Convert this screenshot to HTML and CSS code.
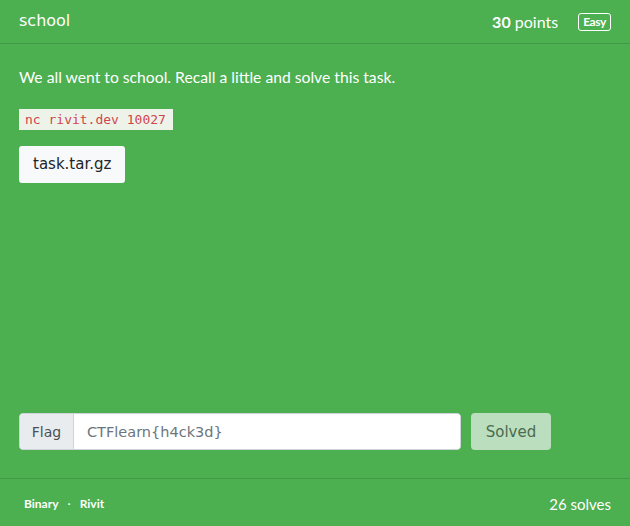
FILE: index.html
```html
<!DOCTYPE html>
<html>
<head>
<meta charset="utf-8">
<link rel="stylesheet" href="styles.css">
</head>
<body>
<div class="card">
  <div class="card-header">
    <div class="title">school</div>
    <div class="meta">
      <span class="points"><b>30</b> points</span>
      <span class="badge">Easy</span>
    </div>
  </div>
  <div class="card-body">
    <p class="desc">We all went to school. Recall a little and solve this task.</p>
    <div class="code-row"><code class="code">nc rivit.dev 10027</code></div>
    <div class="files"><a class="file-btn">task.tar.gz</a></div>
    <div class="spacer"></div>
    <div class="flag-row">
      <div class="input-group">
        <span class="prepend">Flag</span>
        <input class="flag-input" type="text" value="CTFlearn{h4ck3d}">
      </div>
      <button class="solved-btn">Solved</button>
    </div>
  </div>
  <div class="card-footer">
    <div class="tags"><b>Binary</b><span class="dot">·</span><b>Rivit</b></div>
    <div class="solves">26 solves</div>
  </div>
</div>
</body>
</html>
```
FILE: styles.css
```css
html, body {
  margin: 0;
  padding: 0;
  background: #4caf50;
}
body {
  font-family: Lato, "Open Sans", sans-serif;
  color: #fff;
}
.card {
  width: 630px;
  height: 526px;
  display: flex;
  flex-direction: column;
  background: #4caf50;
}
.card-header {
  height: 44px;
  box-sizing: border-box;
  border-bottom: 1px solid rgba(0,0,0,0.13);
  display: flex;
  align-items: center;
  justify-content: space-between;
  padding: 0 19px 0 19px;
}
.title {
  font-family: "DejaVu Sans", sans-serif;
  font-size: 16px;
  font-weight: 400;
  margin-top: -3px;
}
.meta {
  display: flex;
  align-items: center;
  gap: 20px;
}
.points {
  font-size: 16px;
}
.points b {
  font-weight: 700;
}
.badge {
  font-size: 12px;
  font-weight: 700;
  border: 1px solid #fff;
  border-radius: 3px;
  padding: 0 4px;
  line-height: 16px;
  letter-spacing: -0.4px;
}
.card-body {
  flex: 1;
  display: flex;
  flex-direction: column;
  padding: 23px 19px 28px;
}
.desc {
  margin: 0;
  font-size: 15.7px;
  line-height: 20px;
}
.code-row {
  margin-top: 22px;
  display: flex;
}
.code {
  font-family: "DejaVu Sans Mono", monospace;
  font-size: 13px;
  line-height: 21px;
  background: #eef3ea;
  color: #d0454c;
  padding: 0 7px 0 6px;
}
.files {
  margin-top: 16px;
  display: flex;
}
.file-btn {
  display: block;
  background: #f8f9fa;
  color: #212529;
  font-family: "DejaVu Sans", sans-serif;
  font-size: 15px;
  height: 37px;
  line-height: 37px;
  padding: 0 14px;
  border-radius: 3px;
}
.spacer {
  flex: 1;
}
.flag-row {
  display: flex;
  gap: 10px;
  align-items: stretch;
}
.input-group {
  display: flex;
  width: 442px;
  height: 37px;
  box-sizing: border-box;
  border: 1px solid #ced4da;
  border-radius: 4px;
  overflow: hidden;
  background: #fff;
}
.prepend {
  width: 54px;
  box-sizing: border-box;
  background: #e9ecef;
  border-right: 1px solid #ced4da;
  color: #495057;
  font-family: "DejaVu Sans", sans-serif;
  font-size: 14px;
  display: flex;
  align-items: center;
  justify-content: center;
}
.flag-input {
  flex: 1;
  border: none;
  outline: none;
  padding: 0 13px;
  font-family: "DejaVu Sans", sans-serif;
  font-size: 14.5px;
  color: #6c757d;
  background: #fff;
}
.solved-btn {
  width: 80px;
  height: 37px;
  border: none;
  border-radius: 4px;
  background: #bbdfbe;
  color: #4c6a4f;
  font-family: "DejaVu Sans", sans-serif;
  font-size: 15px;
}
.card-footer {
  height: 48px;
  box-sizing: border-box;
  border-top: 1px solid rgba(0,0,0,0.13);
  display: flex;
  align-items: center;
  justify-content: space-between;
  padding: 2px 19px 0 24px;
}
.tags {
  font-size: 12px;
  display: flex;
  align-items: center;
}
.tags b {
  font-weight: 700;
}
.dot {
  margin: 0 9px;
}
.solves {
  font-size: 15px;
}
```
